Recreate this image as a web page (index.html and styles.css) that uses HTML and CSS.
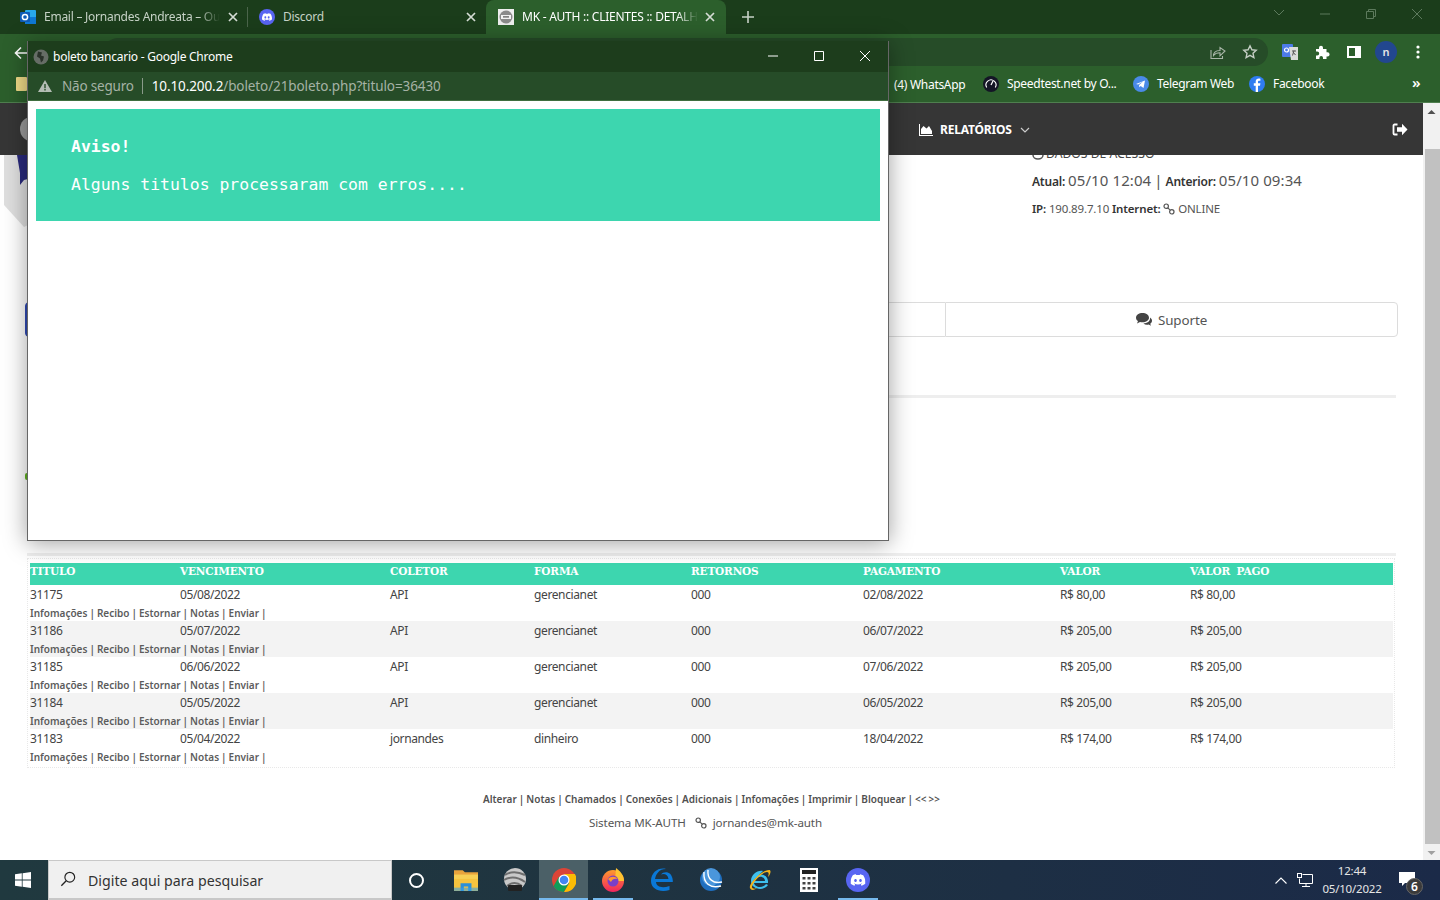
FILE: index.html
```html
<!DOCTYPE html>
<html lang="pt-BR">
<head>
<meta charset="utf-8">
<title>MK - AUTH :: CLIENTES :: DETALHES</title>
<link rel="stylesheet" href="styles.css">
</head>
<body>
<svg class="defs" aria-hidden="true">
  <symbol id="clyde" viewBox="0 0 24 24"><path fill="#fff" d="M20.317 4.37a19.791 19.791 0 0 0-4.885-1.515.074.074 0 0 0-.079.037c-.21.375-.444.864-.608 1.25a18.27 18.27 0 0 0-5.487 0 12.64 12.64 0 0 0-.617-1.25.077.077 0 0 0-.079-.037A19.736 19.736 0 0 0 3.677 4.37a.07.07 0 0 0-.032.027C.533 9.046-.32 13.58.099 18.057a.082.082 0 0 0 .031.057 19.9 19.9 0 0 0 5.993 3.03.078.078 0 0 0 .084-.028 14.09 14.09 0 0 0 1.226-1.994.076.076 0 0 0-.041-.106 13.107 13.107 0 0 1-1.872-.892.077.077 0 0 1-.008-.128 10.2 10.2 0 0 0 .372-.292.074.074 0 0 1 .077-.01c3.928 1.793 8.18 1.793 12.062 0a.074.074 0 0 1 .078.01c.12.098.246.198.373.292a.077.077 0 0 1-.006.127 12.299 12.299 0 0 1-1.873.892.077.077 0 0 0-.041.107c.36.698.772 1.362 1.225 1.993a.076.076 0 0 0 .084.028 19.839 19.839 0 0 0 6.002-3.03.077.077 0 0 0 .032-.054c.5-5.177-.838-9.674-3.549-13.66a.061.061 0 0 0-.031-.03zM8.02 15.33c-1.183 0-2.157-1.085-2.157-2.419 0-1.333.956-2.419 2.157-2.419 1.21 0 2.176 1.096 2.157 2.42 0 1.333-.956 2.418-2.157 2.418zm7.975 0c-1.183 0-2.157-1.085-2.157-2.419 0-1.333.955-2.419 2.157-2.419 1.21 0 2.176 1.096 2.157 2.42 0 1.333-.946 2.418-2.157 2.418z"/></symbol>
  <symbol id="x" viewBox="0 0 10 10"><path d="M1 1l8 8M9 1l-8 8" stroke="#d5ddd5" stroke-width="1.7" fill="none"/></symbol>
  <symbol id="link" viewBox="0 0 12 12"><g fill="none" stroke="currentColor" stroke-width="1.2"><circle cx="3.2" cy="3.2" r="2.2"/><circle cx="8.8" cy="8.8" r="2.2"/><path d="M4.8 4.8l2.4 2.4"/></g></symbol>
</svg>

<div class="desktop">
  <div class="browser">
    <div class="tabstrip">
      <div class="tab tab-outlook">
        <svg class="fav" viewBox="0 0 16 16"><rect x="5" y="1" width="11" height="14" rx="1" fill="#28a8ea"/><rect x="5" y="8" width="11" height="7" fill="#0f78d4"/><rect x="0" y="3" width="10" height="10" rx="1" fill="#0f5cb8"/><circle cx="5" cy="8" r="2.6" fill="none" stroke="#fff" stroke-width="1.5"/></svg>
        <span class="tab-title">Email – Jornandes Andreata – Ou</span>
        <svg class="tab-x"><use href="#x"/></svg>
      </div>
      <i class="tab-sep"></i>
      <div class="tab tab-discord">
        <svg class="fav" viewBox="0 0 16 16"><circle cx="8" cy="8" r="8" fill="#5865f2"/><use href="#clyde" x="3" y="3" width="10" height="10"/></svg>
        <span class="tab-title">Discord</span>
        <svg class="tab-x"><use href="#x"/></svg>
      </div>
      <div class="tab tab-active">
        <svg class="fav" viewBox="0 0 16 16"><rect width="16" height="16" fill="#eee"/><circle cx="8" cy="8" r="6.5" fill="#8a8a8a"/><rect x="3" y="6" width="10" height="4" fill="#f2f2f2"/><rect x="5" y="7.3" width="6" height="1.2" fill="#555"/></svg>
        <span class="tab-title">MK - AUTH :: CLIENTES :: DETALH</span>
        <svg class="tab-x"><use href="#x"/></svg>
      </div>
      <svg class="newtab" viewBox="0 0 12 12"><path d="M6 0v12M0 6h12" stroke="#c8d2c8" stroke-width="1.6"/></svg>
      <div class="winctl">
        <svg viewBox="0 0 46 20"><path d="M18 6l5 5 5-5" fill="none" stroke="#5d7a5d" stroke-width="1"/></svg>
        <svg viewBox="0 0 46 20"><path d="M18 10h10" stroke="#5d7a5d" stroke-width="1"/></svg>
        <svg viewBox="0 0 46 20"><path d="M18.500 7.500h7v7h-7zM20.500 7.500v-2h7v7h-2" fill="none" stroke="#5d7a5d" stroke-width="1"/></svg>
        <svg viewBox="0 0 46 20"><path d="M18 5l10 10M28 5L18 15" stroke="#5d7a5d" stroke-width="1"/></svg>
      </div>
    </div>

    <div class="toolbar">
      <svg class="back" viewBox="0 0 14 14"><path d="M13 7H2M7 1.500L1.500 7 7 12.500" fill="none" stroke="#fff" stroke-width="1.6"/></svg>
      <div class="omnibox">
        <svg class="omni-ic" viewBox="0 0 16 16"><path d="M10 3.500V6.500C5 6.500 3.500 9 3.500 11.500 5 9.500 7 8.800 10 8.800v3L15 7z" fill="none" stroke="#a9b6a9" stroke-width="1.100"/><path d="M1 6v8.500h11.500V12" fill="none" stroke="#a9b6a9" stroke-width="1.100"/></svg>
        <svg class="omni-ic" viewBox="0 0 16 16"><path d="M8 1.800l1.900 4 4.300.5-3.200 3 .9 4.300L8 11.400l-3.900 2.200.9-4.300-3.200-3 4.300-.5z" fill="none" stroke="#c4cec4" stroke-width="1.400"/></svg>
      </div>
      <div class="tool-icons">
        <svg viewBox="0 0 16 16"><rect x="0" y="0" width="11" height="13" rx="1" fill="#4c7be8"/><path d="M7 3h9v13H9z" fill="#d9dcd9"/><path d="M10 7h4M12 6.500l-1.500 5M11 8l2.500 3" stroke="#555" stroke-width="1" fill="none"/><circle cx="4.500" cy="6" r="2" fill="none" stroke="#fff" stroke-width="1.200"/></svg>
        <svg viewBox="0 0 16 16"><path d="M2 5h3V3.800a2 2 0 0 1 4 0V5h3.500v3.300h1a2.100 2.100 0 0 1 0 4.200h-1V15H9v-1.300a1.800 1.800 0 0 0-3.600 0V15H2v-3.500h1.200a2 2 0 0 0 0-4H2z" fill="#fff"/></svg>
        <svg viewBox="0 0 16 16"><path d="M1 2h14v12H1z M3 4v8h6V4z" fill="#fff" fill-rule="evenodd"/></svg>
        <span class="avatar">n</span>
        <svg viewBox="0 0 16 16"><circle cx="8" cy="3" r="1.600" fill="#fff"/><circle cx="8" cy="8" r="1.600" fill="#fff"/><circle cx="8" cy="13" r="1.600" fill="#fff"/></svg>
      </div>
    </div>

    <div class="bookmarks">
      <span class="bm-folder"></span>
      <span class="bm bm-wa">(4) WhatsApp</span>
      <span class="bm bm-speed"><svg viewBox="0 0 16 16"><circle cx="8" cy="8" r="8" fill="#141526"/><path d="M3.700 11.500a5 5 0 1 1 8.600 0" fill="none" stroke="#fff" stroke-width="1.100"/><path d="M8 9l2-4" stroke="#fff" stroke-width="1.200"/></svg>Speedtest.net by O...</span>
      <span class="bm bm-tele"><svg viewBox="0 0 16 16"><circle cx="8" cy="8" r="8" fill="#4a8ae8"/><path d="M3 8l9-3.600-1.500 7.500-2.800-2-1.400 1.300-.2-2.300 4-3.300-5 2.900z" fill="#fff"/></svg>Telegram Web</span>
      <span class="bm bm-fb"><svg viewBox="0 0 16 16"><circle cx="8" cy="8" r="8" fill="#2f7cf0"/><path d="M9 16V9.700h2l.4-2.400H9V5.900c0-.8.300-1.200 1.200-1.200h1.200V2.700C11 2.600 10.400 2.500 9.800 2.500 8 2.500 6.700 3.600 6.700 5.600v1.700H4.800v2.400h1.900V16z" fill="#fff"/></svg>Facebook</span>
      <span class="bm-more">»</span>
    </div>

    <div class="viewport">
      <main class="page">
        <header class="topnav">
          <span class="nav-logo"></span>
          <span class="nav-item"><svg viewBox="0 0 14 12"><path d="M0 0h1v11h13v1H0z M2 10V5l2.500-3 3 2.500L10 2l3 5v3z" fill="#fff"/></svg>RELATÓRIOS<svg class="chev" viewBox="0 0 10 6"><path d="M1 1l4 4 4-4" fill="none" stroke="#ccc" stroke-width="1.200"/></svg></span>
          <svg class="nav-exit" viewBox="0 0 16 13"><path d="M5.500 1.500H2.500a1 1 0 0 0-1 1v8a1 1 0 0 0 1 1h3" fill="none" stroke="#fff" stroke-width="1.800"/><path d="M5 4.300h5V.8l5.500 5.700L10 12.200V8.700H5z" fill="#fff"/></svg>
        </header>

        <svg class="logo-bit" viewBox="0 0 24 72"><path d="M0 0h24v70L20 72 0 50z" fill="#dfdfdf"/><path d="M13 0h11v24l-4 1-4 5 0-12z" fill="#2a2a7c"/></svg>

        <section class="top">
          <div class="access">
            <h3 class="access-title"><svg viewBox="0 0 12 12"><path d="M1 7a5 4 0 0 0 10 0" fill="none" stroke="#555" stroke-width="1.500"/></svg>DADOS DE ACESSO</h3>
            <p class="access-line"><b>Atual:</b> <span class="big">05/10 12:04</span> <span class="big">|</span> <b>Anterior:</b> <span class="big">05/10 09:34</span></p>
            <p class="ip-line"><b>IP:</b> 190.89.7.10 <b>Internet:</b> <svg class="lk"><use href="#link"/></svg> ONLINE</p>
          </div>
        </section>

        <nav class="actions">
          <span class="act act-blue"></span>
          <span class="act act-mid"></span>
          <span class="act act-support"><svg viewBox="0 0 16 13"><path d="M6.500 0C3 0 0 2 0 4.700c0 1.400.8 2.600 2 3.400L1 10.500l3-1.500c.8.200 1.600.300 2.500.300C10 9.300 13 7.300 13 4.700S10 0 6.500 0z" fill="#444"/><path d="M14 4.500c.1.300.1.600.1.800 0 3-3 5-6.700 5.200 1 .8 2.300 1.200 3.600 1.200.6 0 1.100-.1 1.600-.2l2.400 1.200-.8-2c1-.7 1.800-1.700 1.800-3 0-1.200-.7-2.300-2-3.200z" fill="#444"/></svg>Suporte</span>
        </nav>

        <hr class="rule rule-a">
        <i class="green-bit"></i>
        <hr class="rule rule-b">

        <div class="table-box">
          <table class="titles">
            <thead>
              <tr><th class="c1">TITULO</th><th class="c2">VENCIMENTO</th><th class="c3">COLETOR</th><th class="c4">FORMA</th><th class="c5">RETORNOS</th><th class="c6">PAGAMENTO</th><th class="c7">VALOR</th><th class="c8">VALOR PAGO</th></tr>
            </thead>
            <tbody>
              <tr><td>31175</td><td>05/08/2022</td><td>API</td><td>gerencianet</td><td>000</td><td>02/08/2022</td><td>R$ 80,00</td><td>R$ 80,00</td></tr>
              <tr><td colspan="8" class="links">Infomações | Recibo | Estornar | Notas | Enviar |</td></tr>
              <tr class="alt"><td>31186</td><td>05/07/2022</td><td>API</td><td>gerencianet</td><td>000</td><td>06/07/2022</td><td>R$ 205,00</td><td>R$ 205,00</td></tr>
              <tr class="alt"><td colspan="8" class="links">Infomações | Recibo | Estornar | Notas | Enviar |</td></tr>
              <tr><td>31185</td><td>06/06/2022</td><td>API</td><td>gerencianet</td><td>000</td><td>07/06/2022</td><td>R$ 205,00</td><td>R$ 205,00</td></tr>
              <tr><td colspan="8" class="links">Infomações | Recibo | Estornar | Notas | Enviar |</td></tr>
              <tr class="alt"><td>31184</td><td>05/05/2022</td><td>API</td><td>gerencianet</td><td>000</td><td>06/05/2022</td><td>R$ 205,00</td><td>R$ 205,00</td></tr>
              <tr class="alt"><td colspan="8" class="links">Infomações | Recibo | Estornar | Notas | Enviar |</td></tr>
              <tr><td>31183</td><td>05/04/2022</td><td>jornandes</td><td>dinheiro</td><td>000</td><td>18/04/2022</td><td>R$ 174,00</td><td>R$ 174,00</td></tr>
              <tr><td colspan="8" class="links">Infomações | Recibo | Estornar | Notas | Enviar |</td></tr>
            </tbody>
          </table>
        </div>

        <p class="foot-links">Alterar | Notas | Chamados | Conexões | Adicionais | Infomações | Imprimir | Bloquear | &lt;&lt; &gt;&gt;</p>
        <p class="foot-sys">Sistema MK-AUTH <svg class="lk"><use href="#link"/></svg> jornandes@mk-auth</p>
      </main>
      <div class="scrollbar">
        <svg viewBox="0 0 17 14"><path d="M4.500 9l4-4 4 4z" fill="#505050"/></svg>
        <span class="thumb"></span>
        <svg viewBox="0 0 17 14"><path d="M4.500 5l4 4 4-4z" fill="#a0a0a0"/></svg>
      </div>
    </div>
  </div>

  <footer class="taskbar">
    <span class="start"><svg viewBox="0 0 16 16"><path d="M0 2.300l6.800-1v6.300H0zM7.600 1.200L16 0v7.600H7.600zM0 8.400h6.800v6.300l-6.800-1zM7.600 8.400H16V16l-8.400-1.200z" fill="#fff"/></svg></span>
    <span class="search"><svg viewBox="0 0 18 18"><circle cx="11" cy="7" r="5.500" fill="none" stroke="#222" stroke-width="1.300"/><path d="M7 11l-5.500 5.500" stroke="#222" stroke-width="1.500"/></svg>Digite aqui para pesquisar</span>
    <span class="tb"><i class="cortana"></i></span>
    <span class="tb"><svg viewBox="0 0 22 20"><path d="M0 1h8l2 2h12v5H0z" fill="#e8a33c"/><path d="M0 5h22v15H0z" fill="#f7cf55"/><path d="M0 9h22v11H0z" fill="#f5c33f"/><path d="M6 13h10v7h-3v-4H9v4H6z" fill="#2a8fd8"/><path d="M0 17h22v3H0z" fill="#3aa0e5" opacity=".6"/></svg></span>
    <span class="tb"><svg viewBox="0 0 24 24"><circle cx="12" cy="11" r="11" fill="#c9c9c9"/><path d="M2 7c6-4 12-4 20 0M1 12c7-4 14-3 21 2M4 18c5-4 10-4 15 0" fill="none" stroke="#6e6e6e" stroke-width="2"/><rect x="5" y="17" width="14" height="6" rx="1" fill="#222"/></svg></span>
    <span class="tb tb-active"><svg viewBox="0 0 24 24"><circle cx="12" cy="12" r="12" fill="#db4437"/><path d="M12 6h10.900A12 12 0 0 1 12 24l5.200-9z" fill="#fbbc05"/><path d="M1.600 18L7 8.800l5 3.200 5 3-5.200 9A12 12 0 0 1 1.600 18z" fill="#0f9d58"/><circle cx="12" cy="12" r="5.500" fill="#fff"/><circle cx="12" cy="12" r="4.300" fill="#4285f4"/></svg></span>
    <span class="tb tb-open"><svg viewBox="0 0 24 24"><defs><linearGradient id="ff" x1="0" y1="0" x2="0" y2="1"><stop offset="0" stop-color="#ff9a2e"/><stop offset="1" stop-color="#f0245e"/></linearGradient></defs><circle cx="12" cy="13" r="11" fill="url(#ff)"/><path d="M15 0c4 3 8 7 8 13h-9z" fill="#ffc231"/><circle cx="12" cy="13" r="5.500" fill="#7a3fc8"/><path d="M7 11c3-3 7-3 10 0-3-1-6 0-7 3z" fill="#ff9a2e"/></svg></span>
    <span class="tb"><svg viewBox="0 0 24 24"><path d="M5 11h13.500C18 6.500 14 5 11 6.500 14 3 22 3 22.800 12.500V14H6c.5 5 6 6.500 13.500 4v4C10 25 1 21 1 13 1 4 9 -1 16 1 9 1 6 6 5 11z" fill="#0a78d7"/></svg></span>
    <span class="tb"><svg viewBox="0 0 24 24"><circle cx="12" cy="12" r="11" fill="#1f6fc0"/><circle cx="12" cy="9" r="9" fill="#4a96dc"/><path d="M9 2c-1 9 5 14 14 12M5 4c-1 11 6 17 17 14" fill="none" stroke="#fff" stroke-width="1.400"/></svg></span>
    <span class="tb"><svg viewBox="0 0 24 24"><path d="M5 13h12C17 9 11 7 8 11 10 5 19 5 20 13v2H6c.5 4 8 6 12 1l2 1c-5 7-17 4-17-4C3 7 9 2 15 3z" fill="#3ec0ee"/><path d="M2 20C0 16 14 2 21 2c3 0 1 5-1 7 1-3 1-5-1-5C14 4 4 15 4 19c0 2 3 2 5 1-2 2-6 3-7 0z" fill="#f2b51d"/></svg></span>
    <span class="tb"><svg viewBox="0 0 18 24"><path d="M0 0h18v24H0z" fill="#fff"/><path d="M2 2h14v4H2z" fill="#222"/><g fill="#444"><rect x="2.500" y="9" width="3" height="2.500"/><rect x="7.500" y="9" width="3" height="2.500"/><rect x="12.500" y="9" width="3" height="2.500"/><rect x="2.500" y="14" width="3" height="2.500"/><rect x="7.500" y="14" width="3" height="2.500"/><rect x="12.500" y="14" width="3" height="2.500"/><rect x="2.500" y="19" width="3" height="2.500"/><rect x="7.500" y="19" width="3" height="2.500"/><rect x="12.500" y="19" width="3" height="2.500"/></g></svg></span>
    <span class="tb tb-open"><svg viewBox="0 0 24 24"><circle cx="12" cy="12" r="12" fill="#5865f2"/><use href="#clyde" x="4.500" y="4.500" width="15" height="15"/></svg></span>
    <span class="tray">
      <svg class="tray-up" viewBox="0 0 12 7"><path d="M.5 6.500L6 1l5.500 5.500" fill="none" stroke="#fff" stroke-width="1.100"/></svg>
      <svg class="tray-net" viewBox="0 0 16 14"><path d="M5.500 1.500h10v9h-13v-5M9 10.500v2.500M5 13.500h8" fill="none" stroke="#fff" stroke-width="1"/><rect x=".5" y=".5" width="4" height="4" fill="#1b2a48" stroke="#fff"/></svg>
      <span class="clock"><span>12:44</span><span>05/10/2022</span></span>
      <span class="notif"><svg viewBox="0 0 16 14"><path d="M0 0h16v11H6l-3 3v-3H0z" fill="#fff"/></svg><b class="badge">6</b></span>
    </span>
  </footer>

  <section class="popup">
    <div class="pop-title">
      <svg class="pop-globe" viewBox="0 0 16 16"><circle cx="8" cy="8" r="7.500" fill="#666d66"/><path d="M5 2.500l4 1-1 3 3 1-1 4-2 2-1-4-3-2z" fill="#2a322a"/></svg>
      <span class="pop-name">boleto bancario - Google Chrome</span>
      <svg class="pop-ctl" viewBox="0 0 46 16"><path d="M18 8h10" stroke="#fff"/></svg>
      <svg class="pop-ctl" viewBox="0 0 46 16"><path d="M18.500 3.500h9v9h-9z" fill="none" stroke="#fff"/></svg>
      <svg class="pop-ctl" viewBox="0 0 46 16"><path d="M18 3l10 10M28 3L18 13" stroke="#fff"/></svg>
    </div>
    <div class="pop-url">
      <svg class="warn" viewBox="0 0 14 12"><path d="M7 0l7 12H0z" fill="#b4bdb4"/><path d="M6.300 4h1.400v4.200H6.300zM6.300 9h1.400v1.400H6.300z" fill="#264c28"/></svg>
      <span class="insecure">Não seguro</span>
      <i class="url-sep"></i>
      <span class="url"><b>10.10.200.2</b>/boleto/21boleto.php?titulo=36430</span>
    </div>
    <div class="pop-body">
      <div class="alert">
        <strong>Aviso!</strong>
        <p>Alguns titulos processaram com erros....</p>
      </div>
    </div>
  </section>
</div>
</body>
</html>
```

FILE: styles.css
```css
* { box-sizing: border-box; }
html, body { margin: 0; height: 100%; overflow: hidden; }
body { font-family: "Noto Sans", "Open Sans", sans-serif; color: #444; background: #fff; }
.defs { display: none; }

.desktop { position: relative; width: 1440px; height: 900px; display: flex; flex-direction: column; overflow: hidden; }
.browser { flex: 1; display: flex; flex-direction: column; min-height: 0; }

/* Tab strip */
.tabstrip { height: 34px; flex: none; background: #1b3d1b; display: flex; align-items: stretch; position: relative; color: #c6d2c6; font-size: 12px; letter-spacing: -.25px; }
.tab { display: flex; align-items: center; position: relative; }
.tab-outlook { width: 247px; padding-left: 20px; }
.tab-discord { width: 239px; padding-left: 12px; }
.tab-active { width: 240px; padding-left: 12px; background: #2c5f2c; border-radius: 8px 8px 0 0; color: #fff; }
.fav { width: 16px; height: 16px; flex: none; margin: -1px 8px 0 0; }
.tab-title { flex: none; white-space: nowrap; margin-top: -2px; }
.tab-outlook .tab-title, .tab-active .tab-title { -webkit-mask-image: linear-gradient(90deg, #000 88%, transparent); mask-image: linear-gradient(90deg, #000 88%, transparent); }
.tab-x { position: absolute; width: 10px; height: 10px; top: 12px; right: 9px; }
.tab-discord .tab-x { right: 10px; }
.tab-active .tab-x { right: 11px; }
.tab-sep { width: 1px; height: 20px; align-self: center; background: #4b654b; }
.tab-discord { margin-left: -1px; }
.newtab { width: 12px; height: 12px; align-self: center; margin-left: 16px; }
.winctl { margin-left: auto; display: flex; }
.winctl svg { width: 46px; height: 20px; margin-top: 4px; }

/* Toolbar */
.toolbar { height: 35px; flex: none; background: #2c5f2c; display: flex; align-items: center; padding-left: 14px; }
.back { width: 14px; height: 14px; flex: none; margin-top: 2px; }
.omnibox { margin-left: 76px; width: 1164px; height: 28px; background: #264c28; border-radius: 14px; display: flex; align-items: center; justify-content: flex-end; gap: 16px; padding-right: 10px; margin-top: 1px; }
.omni-ic { width: 16px; height: 16px; }
.tool-icons { display: flex; align-items: center; margin-left: 14px; gap: 16px; }
.tool-icons svg { width: 16px; height: 16px; flex: none; }
.avatar { width: 22px; height: 22px; margin: 0 -3px; border-radius: 50%; background: #22478f; color: #e6e6e6; font-size: 11px; font-weight: 600; text-align: center; line-height: 21px; flex: none; }

/* Bookmarks */
.bookmarks { height: 34px; flex: none; background: #2c5f2c; border-bottom: 1px solid #4f7f4f; display: flex; align-items: center; position: relative; color: #fff; font-size: 12px; letter-spacing: -.3px; }
.bm-folder { width: 11px; height: 14px; margin-left: 16px; background: #efdb87; border-radius: 1px; margin-top: -3px; }
.bm { display: flex; align-items: center; white-space: nowrap; }
.bm svg { width: 16px; height: 16px; margin-right: 8px; flex: none; }
.bm-wa { margin-left: 867px; margin-top: -2px; }
.bm-speed { position: absolute; left: 983px; top: 6px; }
.bm-tele { position: absolute; left: 1133px; top: 6px; }
.bm-fb { position: absolute; left: 1249px; top: 6px; }
.bm-more { position: absolute; left: 1412px; top: 3px; font-size: 15px; font-weight: 600; }

/* Page */
.viewport { flex: 1; display: flex; min-height: 0; }
.page { width: 1423px; flex: none; position: relative; overflow: hidden; padding-top: 44px; font-size: 12px; }
.topnav { position: absolute; left: 0; right: 0; top: 0; height: 52px; background: #363636; display: flex; align-items: center; color: #fff; z-index: 2; }
.nav-logo { position: absolute; left: 20px; top: 14px; width: 22px; height: 24px; border-radius: 50%; background: #9a9a9a; }
.nav-item { position: absolute; left: 919px; top: 18px; display: flex; align-items: center; font-size: 12px; font-weight: 700; letter-spacing: -.2px; }
.nav-item svg { width: 14px; height: 12px; margin-right: 7px; }
.nav-item .chev { width: 10px; height: 6px; margin: 1px 0 0 8px; }
.nav-exit { position: absolute; left: 1392px; top: 20px; width: 16px; height: 13px; }
.logo-bit { position: absolute; left: 4px; top: 52px; width: 24px; height: 72px; }

.top { height: 155px; display: flex; justify-content: flex-end; }
.access { width: 391px; }
.access-title { margin: 0; height: 14px; font-size: 12.200px; line-height: 14px; font-weight: 400; color: #444; display: flex; align-items: center; white-space: nowrap; }
.access-title svg { width: 12px; height: 12px; margin-right: 2px; }
.access-line { margin: 9px 0 0; height: 20px; line-height: 20px; font-size: 12px; color: #333; white-space: nowrap; letter-spacing: -.2px; }
.big { font-size: 15px; color: #555; letter-spacing: .1px; }
.access-line b { font-weight: 600; }
.ip-line { margin: 10px 0 0; height: 18px; line-height: 18px; font-size: 11.500px; color: #555; white-space: nowrap; letter-spacing: -.15px; }
.ip-line b { font-weight: 600; color: #333; }
.lk { width: 12px; height: 12px; vertical-align: -2px; color: #555; }

.actions { margin-left: 25px; width: 1373px; height: 35px; display: flex; }
.act { display: flex; align-items: center; justify-content: center; height: 35px; border: 1px solid #dcdcdc; }
.act-blue { width: 60px; background: #2f4ab4; border-color: #2f4ab4; border-radius: 4px 0 0 4px; }
.act-mid { flex: 1; border-left: 0; border-right: 0; }
.act-support { width: 453px; border-radius: 0 4px 4px 0; font-size: 13.400px; color: #555; letter-spacing: -.1px; }
.act-support svg { width: 16px; height: 13px; margin-right: 6px; }

.rule { margin: 0 0 0 27px; width: 1369px; height: 3px; border: 0; background: #eeeeee; }
.rule-a { margin-top: 58px; }
.green-bit { display: block; width: 6px; height: 7px; margin: 75px 0 0 25px; background: #5fb31f; border-radius: 2px; }
.rule-b { margin-top: 73px; }

.table-box { margin: 2px 0 0 27px; width: 1368px; height: 210px; border: 1px dotted #e8e8e8; padding: 4px 2px 0; }
.titles { width: 1363px; border-collapse: collapse; table-layout: fixed; color: #444; }
.titles th { height: 22px; padding: 0 0 6px; background: #3dd6af; color: #fff; font: 700 10.500px/13px "DejaVu Serif", "Liberation Serif", serif; letter-spacing: -.15px; word-spacing: 3px; text-align: left; white-space: nowrap; }
.c1 { width: 150px; } .c2 { width: 210px; } .c3 { width: 144px; } .c4 { width: 157px; }
.c5 { width: 172px; } .c6 { width: 197px; } .c7 { width: 130px; } .c8 { width: 203px; }
.titles td { height: 18px; padding: 2px 0 0; font-size: 12px; line-height: 16px; letter-spacing: -.38px; white-space: nowrap; vertical-align: middle; }
.titles .links { font-size: 10px; font-weight: 600; color: #5c5c5c; letter-spacing: 0; word-spacing: -.6px; }
.alt td { background: #f3f3f3; }

.foot-links { margin: 23px 0 0; text-align: center; font-size: 10px; font-weight: 600; color: #505050; line-height: 16px; word-spacing: -.6px; }
.foot-sys { margin: 8px 0 0; padding-right: 12px; text-align: center; font-size: 11.600px; color: #555; line-height: 16px; letter-spacing: -.1px; }
.foot-sys .lk { margin: 0 3px 0 6px; }

.scrollbar { width: 17px; flex: none; background: #f1f1f1; display: flex; flex-direction: column; }
.scrollbar svg { width: 17px; height: 14px; flex: none; margin-top: 2px; }
.thumb { display: block; margin: 30px 0 0 2px; width: 15px; flex: 1; background: #c1c1c1; }

/* Taskbar */
.taskbar { height: 40px; flex: none; background: linear-gradient(90deg, #20393f 0%, #1f3440 40%, #1b2a48 100%); display: flex; align-items: stretch; color: #fff; }
.start { width: 48px; display: flex; align-items: center; justify-content: center; padding-right: 2px; }
.start svg { width: 16px; height: 16px; }
.search { width: 344px; background: #f0f0f0; border: 1px solid #c8c8c8; border-bottom-width: 2px; color: #333; font-size: 14.200px; display: flex; align-items: center; padding-top: 1px; }
.search svg { width: 16px; height: 16px; margin: -2px 12px 0 11px; }
.tb { width: 49px; display: flex; align-items: center; justify-content: center; position: relative; }
.tb svg { width: 24px; height: 24px; }
.cortana { width: 15px; height: 15px; border: 2px solid #fff; border-radius: 50%; }
.tb-active { background: #4b6067; box-shadow: inset 0 -2px 0 #76b9ed; }
.tb-open::after { content: ""; position: absolute; left: 5px; right: 4px; bottom: 0; height: 2px; background: #76b9ed; }
.tray { margin-left: auto; display: flex; align-items: center; position: relative; width: 168px; }
.tray-up { position: absolute; left: 3px; top: 17px; width: 12px; height: 7px; }
.tray-net { position: absolute; left: 25px; top: 13px; width: 16px; height: 14px; }
.clock { position: absolute; left: 40px; top: 2px; width: 80px; display: flex; flex-direction: column; align-items: center; font-size: 11.500px; line-height: 18px; letter-spacing: -.2px; color: #e6e6e6; }
.notif { position: absolute; left: 127px; top: 12px; width: 16px; height: 14px; }
.notif svg { width: 16px; height: 14px; display: block; }
.badge { position: absolute; left: 7px; top: 6px; width: 17px; height: 17px; border-radius: 50%; background: #3a3a3a; border: 1px solid #666; font-size: 12px; font-weight: 600; line-height: 15px; text-align: center; }

/* Popup window */
.popup { position: absolute; left: 27px; top: 41px; width: 862px; height: 500px; background: #fff; border: 1px solid #666; border-top: 0; box-shadow: 0 2px 22px rgba(0, 0, 0, .38); z-index: 5; display: flex; flex-direction: column; }
.pop-title { height: 31px; flex: none; background: #1d3d1c; display: flex; align-items: center; color: #fff; font-size: 12px; letter-spacing: -.25px; padding-left: 5px; }
.pop-globe { width: 16px; height: 16px; margin-right: 4px; }
.pop-name { flex: 1; white-space: nowrap; }
.pop-ctl { width: 46px; height: 16px; margin-top: -2px; }
.pop-url { height: 29px; flex: none; background: #264c28; border-bottom: 1px solid #3f6e3f; display: flex; align-items: center; padding-left: 10px; font-size: 13.500px; color: #a5b2a5; white-space: nowrap; }
.warn { width: 14px; height: 12px; margin-right: 10px; }
.insecure { letter-spacing: -.2px; }
.url-sep { width: 1px; height: 16px; background: #8a9a8a; margin: 0 9px 0 8px; }
.url { letter-spacing: -.1px; }
.url b { font-weight: 400; color: #fff; }
.pop-body { flex: 1; padding: 8px 8px 0; }
.alert { height: 112px; background: #3dd6af; color: #fff; padding: 28px 35px 0; font: 16.450px/20px "DejaVu Sans Mono", "Liberation Mono", monospace; }
.alert strong { display: block; font-weight: 700; }
.alert p { margin: 18px 0 0; }
```
